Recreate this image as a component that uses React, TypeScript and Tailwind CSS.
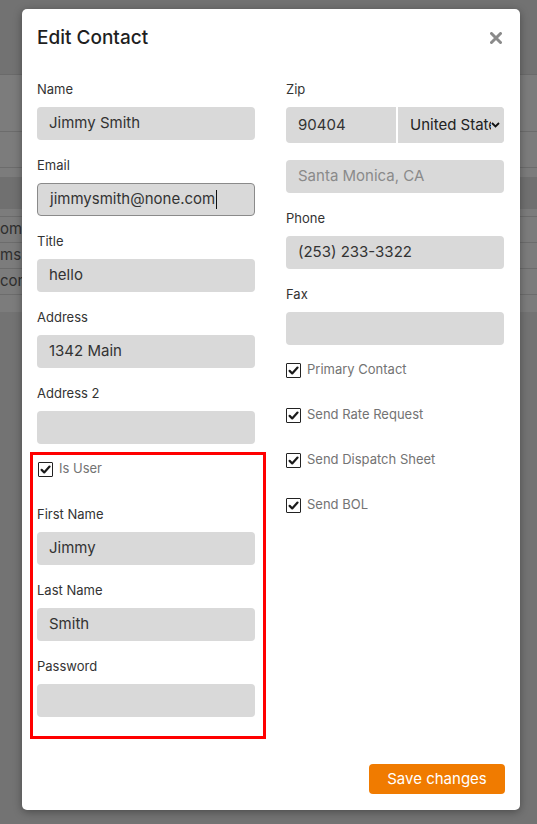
import React from "react";

function Field({ label, value, muted, focused, caret, className = "" }: { label?: string; value?: string; muted?: boolean; focused?: boolean; caret?: boolean; className?: string }) {
  return (
    <div className={className}>
      {label && <div className="h-[20px] leading-[20px] text-[13px] text-[#333] mb-[8px]">{label}</div>}
      <div
        className={
          "h-[33px] rounded-[4px] bg-[#d9d9d9] flex items-center pl-[12px] text-[15px] " +
          (muted ? "text-[#8a8a8a] " : "text-[#333] ") +
          (focused ? "border border-[#8a8a8a] pl-[11px]" : "")
        }
      >
        <span>{value}</span>
        {caret && <span className="inline-block w-[1px] h-[19px] bg-[#111] ml-[1px]" />}
      </div>
    </div>
  );
}

function Check({ label, className = "" }: { label: string; className?: string }) {
  return (
    <div className={"h-[20px] flex items-center " + className}>
      <span className="w-[15px] h-[15px] border-[1.5px] border-[#222] rounded-[1px] flex items-center justify-center bg-white">
        <svg width="11" height="11" viewBox="0 0 12 12">
          <path d="M1.8 6.4 L4.6 9.2 L10.4 2.8" fill="none" stroke="#1a1a1a" strokeWidth="2.4" strokeLinecap="round" strokeLinejoin="round" />
        </svg>
      </span>
      <span className="ml-[6px] text-[13px] text-[#737373]">{label}</span>
    </div>
  );
}

export default function App() {
  return (
    <div className="relative min-h-[824px] w-full overflow-hidden bg-[#737373] font-['Inter',sans-serif]">
      {/* background page */}
      <div className="h-[75px] bg-[#727272] border-b border-[#6a6a6a]" />
      <div className="bg-[#7c7c7c] h-[237px] flex flex-col">
        <div className="h-[57px] border-b border-[#6c6c6c]" />
        <div className="h-[36px] border-b border-[#6c6c6c]" />
        <div className="h-[9px]" />
        <div className="h-[32px] bg-[#707070]" />
        <div className="h-[8px] border-b border-[#6c6c6c]" />
        <div className="h-[26px] border-b border-[#6c6c6c] flex items-center text-[15px] text-[#2e2e2e] whitespace-nowrap">om</div>
        <div className="h-[26px] border-b border-[#6c6c6c] flex items-center text-[15px] text-[#2e2e2e] whitespace-nowrap">ms.</div>
        <div className="h-[26px] border-b border-[#6c6c6c] flex items-center text-[15px] text-[#2e2e2e] whitespace-nowrap">com</div>
        <div className="flex-1" />
      </div>

      {/* modal */}
      <div className="absolute left-[22px] top-[9px] w-[498px] h-[801px] bg-white rounded-[5px] shadow-[0_2px_8px_rgba(0,0,0,0.35)] flex flex-col">
        <div className="pt-[15px] pl-[15px] pr-[17px] h-[43px] flex items-center justify-between">
          <div className="text-[19px] font-medium text-[#1f1f1f] leading-[28px]">Edit Contact</div>
          <svg width="12" height="12" viewBox="0 0 12 12" className="mr-[1px]">
            <path d="M1.5 1.5 L10.5 10.5 M10.5 1.5 L1.5 10.5" stroke="#8a8a8a" strokeWidth="3" strokeLinecap="round" />
          </svg>
        </div>

        <div className="mt-[27px] pl-[15px] pr-[16px] grid grid-cols-[218px_218px] gap-x-[31px]">
          <div className="flex flex-col">
            <Field label="Name" value="Jimmy Smith" className="mb-[15px]" />
            <Field label="Email" value="jimmysmith@none.com" focused caret className="mb-[15px]" />
            <Field label="Title" value="hello" className="mb-[15px]" />
            <Field label="Address" value="1342 Main" className="mb-[15px]" />
            <Field label="Address 2" value="" className="mb-[8px]" />
            <div className="ml-[-7px] mr-[-11px] border-[3px] border-[#ff0000] pt-[4px] pb-[4px] pl-[4px] pr-[8px]">
              <Check label="Is User" className="ml-[1px] mb-[25px]" />
              <Field label="First Name" value="Jimmy" className="mb-[15px]" />
              <Field label="Last Name" value="Smith" className="mb-[15px]" />
              <Field label="Password" value="" className="mb-[15px]" />
            </div>
          </div>

          <div className="flex flex-col">
            <div className="h-[20px] leading-[20px] text-[13px] text-[#333] mb-[8px]">Zip</div>
            <div className="flex h-[36px] gap-[2px]">
              <div className="w-[110px] h-full rounded-l-[4px] bg-[#d9d9d9] flex items-center pl-[12px] text-[15px] text-[#333]">90404</div>
              <div className="relative flex-1 h-full rounded-r-[4px] bg-[#d9d9d9] flex items-center pl-[12px] text-[15px] text-[#222] overflow-hidden whitespace-nowrap">
                <span>United States</span>
                <span className="absolute right-0 top-0 h-full w-[13px] bg-[#d9d9d9] flex items-center">
                  <svg width="9" height="6" viewBox="0 0 9 6">
                    <path d="M1 1 L4.5 4.5 L8 1" fill="none" stroke="#111" strokeWidth="1.8" />
                  </svg>
                </span>
              </div>
            </div>
            <Field value="Santa Monica, CA" muted className="mt-[17px] mb-[15px]" />
            <Field label="Phone" value="(253) 233-3322" className="mb-[15px]" />
            <Field label="Fax" value="" className="mb-[15px]" />
            <Check label="Primary Contact" className="mb-[25px]" />
            <Check label="Send Rate Request" className="mb-[25px]" />
            <Check label="Send Dispatch Sheet" className="mb-[25px]" />
            <Check label="Send BOL" />
          </div>
        </div>

        <div className="mt-auto flex justify-end pr-[15px] pb-[16px]">
          <button className="h-[30px] w-[136px] rounded-[4px] bg-[#f07b00] text-white text-[15px] font-normal">Save changes</button>
        </div>
      </div>
    </div>
  );
}
